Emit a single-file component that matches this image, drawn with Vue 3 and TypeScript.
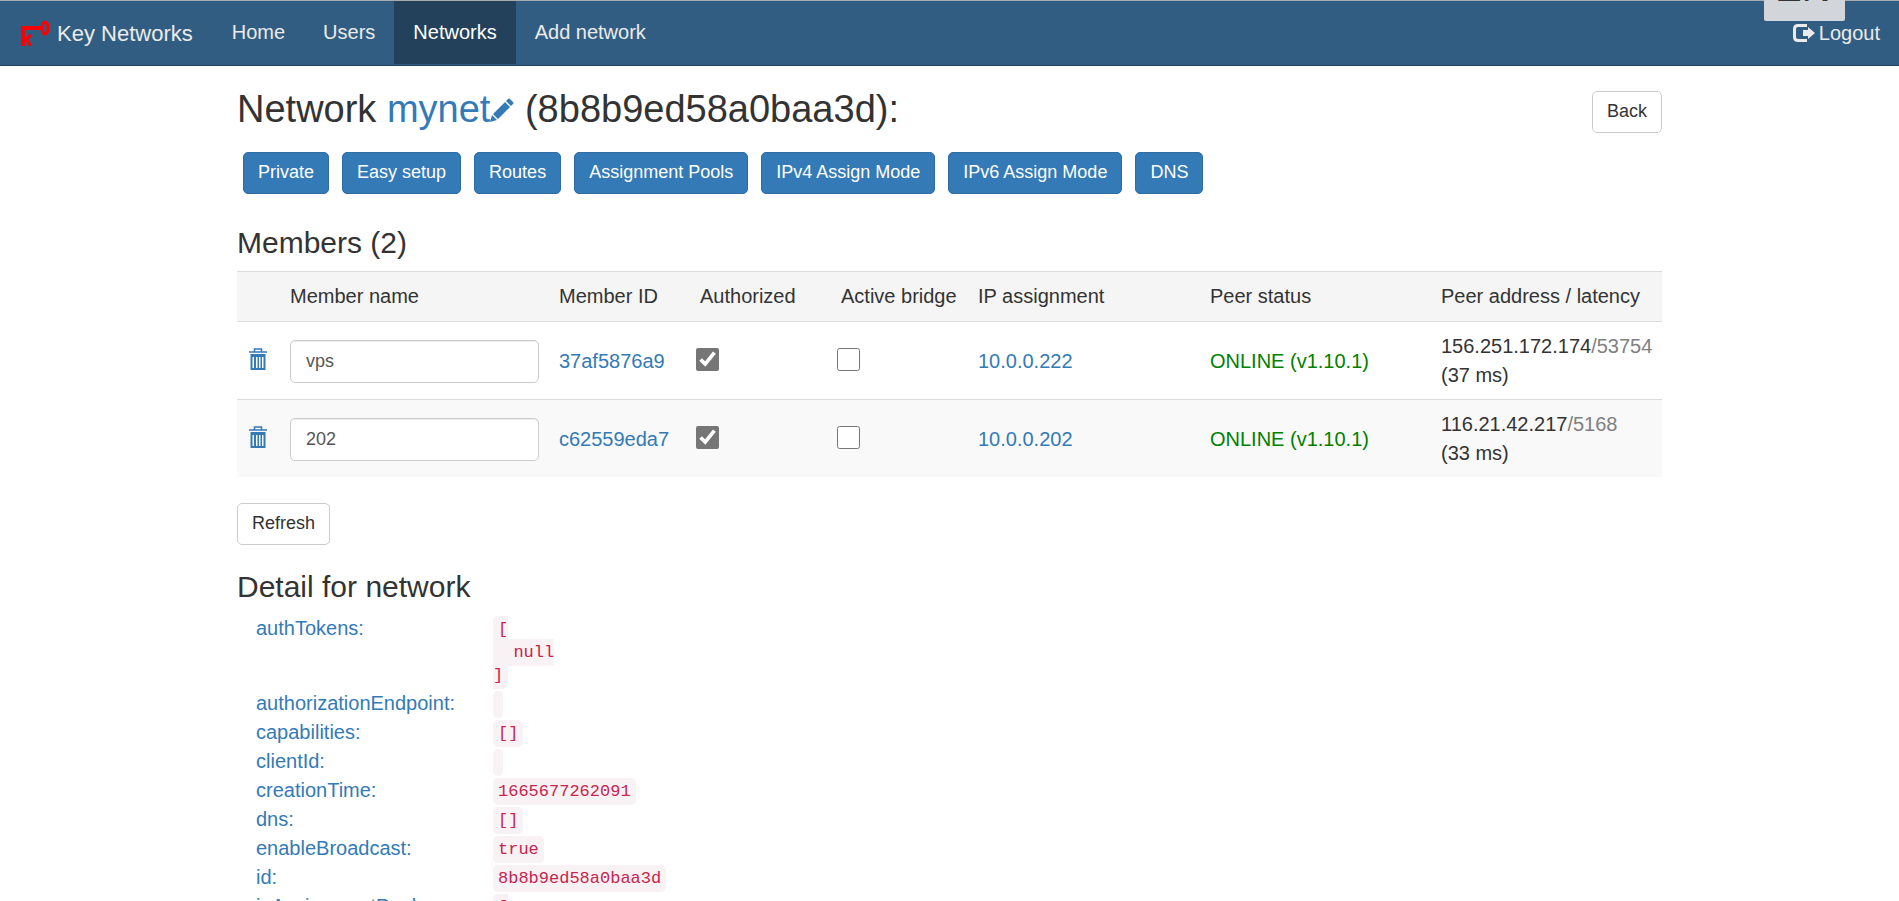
<script setup lang="ts">
import { reactive } from 'vue'

interface Member {
  id: string
  name: string
  authorized: boolean
  bridge: boolean
  ip: string
  address: string
  port: string
  latency: string
}

const navItems = ['Home', 'Users', 'Networks', 'Add network']
const actions = ['Private', 'Easy setup', 'Routes', 'Assignment Pools', 'IPv4 Assign Mode', 'IPv6 Assign Mode', 'DNS']

const members = reactive<Member[]>([
  { id: '37af5876a9', name: 'vps', authorized: true, bridge: false, ip: '10.0.0.222', address: '156.251.172.174', port: '53754', latency: '37 ms' },
  { id: 'c62559eda7', name: '202', authorized: true, bridge: false, ip: '10.0.0.202', address: '116.21.42.217', port: '5168', latency: '33 ms' },
])

const details: { key: string; value: string }[] = [
  { key: 'authTokens', value: '[\n  null\n]' },
  { key: 'authorizationEndpoint', value: '' },
  { key: 'capabilities', value: '[]' },
  { key: 'clientId', value: '' },
  { key: 'creationTime', value: '1665677262091' },
  { key: 'dns', value: '[]' },
  { key: 'enableBroadcast', value: 'true' },
  { key: 'id', value: '8b8b9ed58a0baa3d' },
  { key: 'ipAssignmentPools', value: '[\n]' },
]
</script>

<template>
  <div class="page">
    <header class="navbar">
      <a href="#" class="brand">
        <svg class="logo" viewBox="0 0 28 26" aria-hidden="true">
          <path d="M2 26V8h18" fill="none" stroke="#f00" stroke-width="4" />
          <ellipse cx="24" cy="8" rx="3" ry="6" fill="none" stroke="#f00" stroke-width="3" />
          <path d="M3 21l7-6M5 19l5 7" fill="none" stroke="#f00" stroke-width="3" />
        </svg>
        <span>Key Networks</span>
      </a>
      <nav class="links">
        <a v-for="item in navItems" :key="item" href="#" :class="{ active: item === 'Networks' }">{{ item }}</a>
      </nav>
      <a href="#" class="logout">
        <svg class="logout-icon" viewBox="0 0 22 18" aria-hidden="true">
          <path d="M14 1.500H5Q1.500 1.500 1.500 5v8q0 3.500 3.500 3.500h9" fill="none" stroke="currentColor" stroke-width="3" />
          <path d="M10 6h5V3l7 6-7 6v-3h-5z" fill="currentColor" />
        </svg>
        <span>Logout</span>
      </a>
      <div class="ime"><span>EN</span></div>
    </header>

    <main class="container">
      <div class="title-row">
        <h2>
          Network <a href="#">mynet<svg class="pencil" viewBox="0 0 24 24" aria-hidden="true">
            <path d="M0 24l2-7 5 5zM3 16L15 4l5 5L8 21zM16 3l2-2q1-1 2 0l3 3q1 1 0 2l-2 2z" fill="currentColor" />
          </svg></a> (8b8b9ed58a0baa3d):
        </h2>
        <button type="button" class="btn">Back</button>
      </div>

      <div class="actions">
        <button v-for="a in actions" :key="a" type="button" class="btn primary">{{ a }}</button>
      </div>

      <h3>Members (2)</h3>
      <table>
        <colgroup>
          <col class="c-del"><col class="c-name"><col class="c-id"><col class="c-check"><col class="c-check">
          <col class="c-ip"><col class="c-status"><col class="c-addr">
        </colgroup>
        <thead>
          <tr>
            <th></th>
            <th>Member name</th>
            <th>Member ID</th>
            <th class="inset">Authorized</th>
            <th class="inset">Active bridge</th>
            <th>IP assignment</th>
            <th>Peer status</th>
            <th>Peer address / latency</th>
          </tr>
        </thead>
        <tbody>
          <tr v-for="m in members" :key="m.id">
            <td class="icon-cell delete-cell">
              <a href="#" class="delete" :aria-label="'Delete ' + m.name">
                <svg viewBox="0 0 18 22" aria-hidden="true">
                  <path d="M0 4h18M5.500 4V1h7v3" fill="none" stroke="currentColor" stroke-width="1.500" />
                  <path fill-rule="evenodd" d="M1.500 6h15v16h-15zM3.500 9v11h1.500V9zM7 9v11h1.500V9zM10 9v11h1.500V9zM13 9v11h1.500V9z" fill="currentColor" />
                </svg>
              </a>
            </td>
            <td><input v-model="m.name" type="text" class="field" :aria-label="'Name of ' + m.id"></td>
            <td><a href="#">{{ m.id }}</a></td>
            <td class="icon-cell"><input v-model="m.authorized" type="checkbox" class="check" :aria-label="'Authorize ' + m.id"></td>
            <td class="icon-cell"><input v-model="m.bridge" type="checkbox" class="check" :aria-label="'Bridge ' + m.id"></td>
            <td><a href="#">{{ m.ip }}</a></td>
            <td class="online">ONLINE (v1.10.1)</td>
            <td>{{ m.address }}<span class="port">/{{ m.port }}</span><br>({{ m.latency }})</td>
          </tr>
        </tbody>
      </table>

      <button type="button" class="btn">Refresh</button>

      <h3>Detail for network</h3>
      <dl>
        <template v-for="d in details" :key="d.key">
          <dt><a href="#">{{ d.key }}:</a></dt>
          <dd><pre><code>{{ d.value }}</code></pre></dd>
        </template>
      </dl>
    </main>
  </div>
</template>

<style>
body {
  margin: 0;
  background: #fff;
}
</style>

<style scoped>
* {
  box-sizing: border-box;
}
.page {
  height: 100vh;
  overflow: hidden;
  font: 20px/29px "Liberation Sans", Arial, sans-serif;
  color: #333;
}
a {
  color: #337ab7;
  text-decoration: none;
}
.navbar {
  position: relative;
  display: flex;
  align-items: stretch;
  height: 66px;
  background: #325d82;
  border-top: 1px solid #a8abae;
  border-bottom: 1px solid #23415b;
}
.navbar a {
  color: #ebebeb;
}
.brand {
  display: flex;
  align-items: center;
  gap: 8px;
  padding: 0 20px 0 21px;
  font-size: 22px;
}
.logo {
  width: 28px;
  height: 26px;
}
.links {
  display: flex;
  flex: 1;
}
.links a {
  padding: 17px 19px;
  margin-bottom: 1px;
}
.links a.active {
  background: #23415b;
  color: #fff;
}
.logout {
  display: flex;
  align-items: center;
  gap: 4px;
  padding-right: 19px;
}
.logout-icon {
  width: 22px;
  height: 18px;
}
.ime {
  position: absolute;
  top: -1px;
  right: 54px;
  width: 81px;
  height: 21px;
  overflow: hidden;
  border-radius: 0 0 2px 2px;
  background: #d2d6da;
  color: #333;
  font-size: 40px;
  line-height: 40px;
}
/* Only the feet of the language letters reach below the window edge. */
.ime span {
  display: block;
  margin: -33px 0 0 11px;
}
.container {
  max-width: 1425px;
  margin: 0 auto;
}
.title-row {
  display: flex;
  justify-content: space-between;
  align-items: flex-start;
  padding-top: 25px;
}
h2,
h3 {
  margin: 0;
  font-weight: 400;
}
h2 {
  font-size: 38px;
  line-height: 36px;
}
h3 {
  margin: 24px 0 10px;
  font-size: 30px;
  line-height: 35px;
}
.pencil {
  width: 24px;
  height: 24px;
}
.btn {
  height: 42px;
  padding: 0 14px 1px;
  border: 1px solid #ccc;
  border-radius: 5px;
  background: #fff;
  color: #333;
  font: 18px/25px "Liberation Sans", Arial, sans-serif;
}
.btn.primary {
  border-color: #2e6da4;
  background: #337ab7;
  color: #fff;
}
.actions {
  display: flex;
  gap: 13px;
  padding: 19px 6px 7px;
}
table {
  width: 100%;
  margin: 11px 0 26px;
  border-collapse: collapse;
  table-layout: fixed;
}
.c-del { width: 43px; }
.c-name { width: 269px; }
.c-id { width: 137px; }
.c-check { width: 141px; }
.c-ip { width: 232px; }
.c-status { width: 231px; }
th,
td {
  padding: 10px;
  border-top: 1px solid #ddd;
  text-align: left;
  font-weight: 400;
  vertical-align: middle;
  white-space: nowrap;
}
td {
  padding-bottom: 9px;
}
th {
  background: #f5f5f5;
}
th.inset {
  padding-left: 14px;
}
td.icon-cell {
  padding-bottom: 13px;
}
td.delete-cell {
  padding-left: 12px;
}
tbody tr:nth-child(even) {
  background: #f9f9f9;
}
.delete svg {
  display: block;
  width: 18px;
  height: 22px;
}
.field {
  display: block;
  width: 100%;
  height: 43px;
  padding: 0 15px;
  border: 1px solid #ccc;
  border-radius: 5px;
  box-shadow: inset 0 1px 1px rgba(0, 0, 0, 0.075);
  background: #fff;
  color: #555;
  font: 18px/25px "Liberation Sans", Arial, sans-serif;
}
.check {
  display: block;
  width: 23px;
  height: 23px;
  margin: 0;
  accent-color: #767676;
}
.online {
  color: #008000;
}
.port {
  color: #808080;
}
dl {
  display: grid;
  grid-template-columns: 237px 1fr;
  margin: 0;
  padding-left: 19px;
}
dd,
pre {
  margin: 0;
}
pre {
  padding: 4px 0 2px;
  font: 17px/23px "Liberation Mono", monospace;
}
code {
  padding: 4px 5px;
  border-radius: 5px;
  background: #f9f2f4;
  color: #c7254e;
  font: inherit;
}
</style>
